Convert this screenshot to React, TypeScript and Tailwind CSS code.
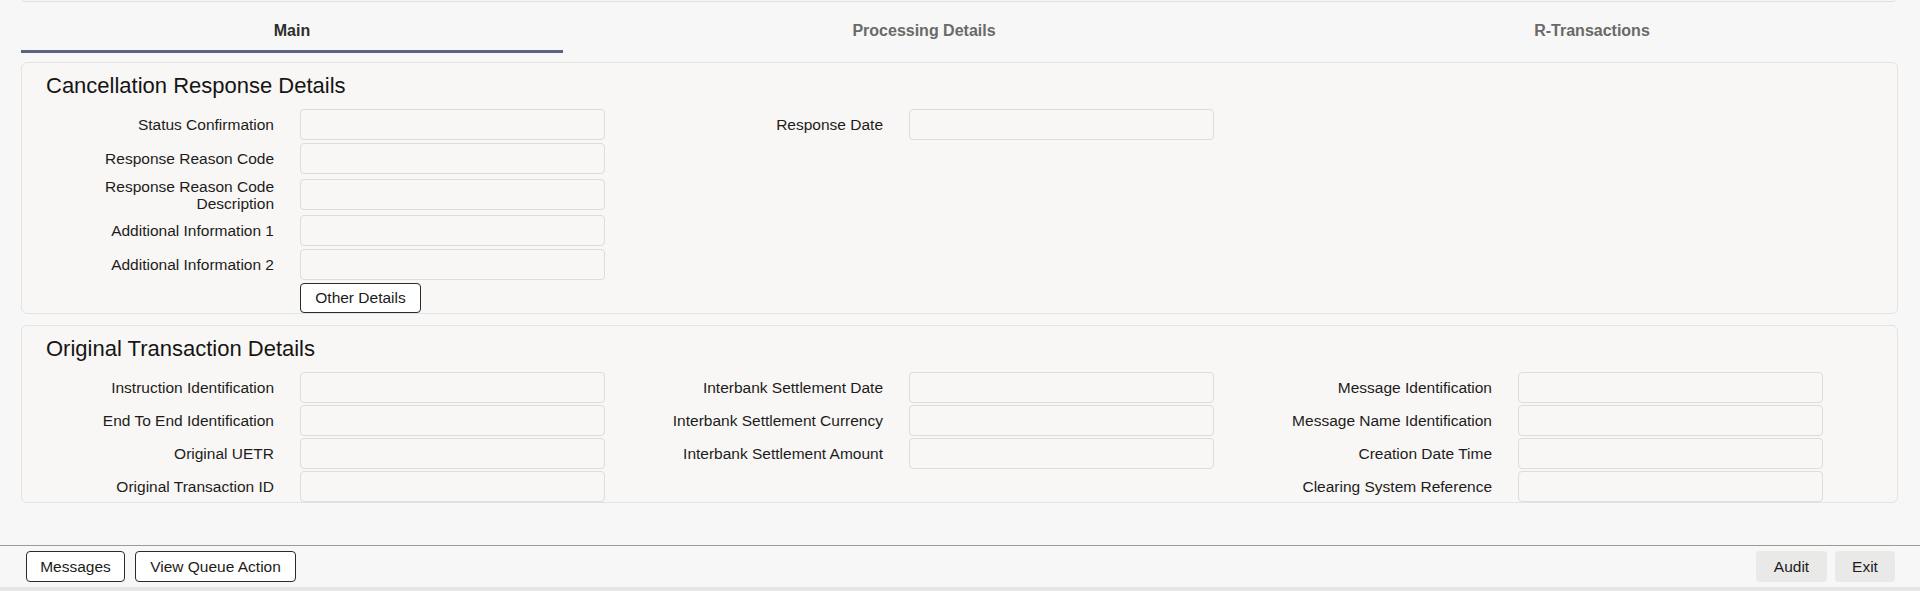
import React from 'react';

type Field = { label: React.ReactNode; tall?: boolean };

const font = { fontFamily: '"Liberation Sans", Arial, sans-serif' };

function FieldRow({ label, tall }: Field) {
    return (
        <div className={`flex items-center ${tall ? 'h-[35px]' : 'h-[31px]'}`}>
            <div className="w-[228px] text-right text-[15.5px] leading-[17px] text-[#1d1c1a]">{label}</div>
            <input
                readOnly
                className="ml-[26px] w-[305px] h-[31px] border border-[#dddcda] rounded-[4px] bg-[#f8f7f6] outline-none"
            />
        </div>
    );
}

function Column({ fields, gap, children }: { fields: Field[]; gap: string; children?: React.ReactNode }) {
    return (
        <div className={`flex flex-col ${gap}`}>
            {fields.map((f, i) => (
                <FieldRow key={i} {...f} />
            ))}
            {children}
        </div>
    );
}

function Panel({ title, children }: { title: string; children: React.ReactNode }) {
    return (
        <div className="mx-[21px] mr-[22px] border border-[#e4e3e1] rounded-[6px] bg-[#f8f7f6] pl-[24px] pt-[9px]">
            <h2 className="text-[22px] leading-[28px] text-[#161513] mb-[9px]">{title}</h2>
            {children}
        </div>
    );
}

export default function App() {
    const tabs = [
        { name: 'Main', w: 'w-[542px]', active: true },
        { name: 'Processing Details', w: 'w-[722px]', active: false },
        { name: 'R-Transactions', w: 'w-[614px]', active: false },
    ];

    return (
        <div style={font} className="w-[1920px] h-[591px] bg-[#f7f7f7] flex flex-col overflow-hidden">
            <div className="ml-[22px] mr-[25px] h-[2px] border-x border-b border-[#e0e0e0] rounded-b-[4px] bg-[#f8f7f6]" />

            <div className="flex ml-[21px]">
                {tabs.map(t => (
                    <div
                        key={t.name}
                        className={`${t.w} h-[51px] pt-[18px] text-center text-[16px] leading-[22px] font-bold ${
                            t.active ? 'border-b-[3px] border-[#5a6482] text-[#2f2e2c]' : 'text-[#6a6967]'
                        }`}
                    >
                        {t.name}
                    </div>
                ))}
            </div>

            <div className="mt-[9px]">
                <Panel title="Cancellation Response Details">
                    <div className="grid grid-cols-[609px_609px_609px]">
                        <Column
                            gap="gap-[3px]"
                            fields={[
                                { label: 'Status Confirmation' },
                                { label: 'Response Reason Code' },
                                { label: <>Response Reason Code<br />Description</>, tall: true },
                                { label: 'Additional Information 1' },
                                { label: 'Additional Information 2' },
                            ]}
                        >
                            <div className="flex">
                                <button className="ml-[254px] h-[30px] w-[121px] border border-[#2b2a28] rounded-[4px] bg-white text-[15.5px] text-[#1d1c1a]">
                                    Other Details
                                </button>
                            </div>
                        </Column>
                        <Column gap="gap-[3px]" fields={[{ label: 'Response Date' }]} />
                    </div>
                </Panel>
            </div>

            <div className="mt-[11px]">
                <Panel title="Original Transaction Details">
                    <div className="grid grid-cols-[609px_609px_609px]">
                        <Column
                            gap="gap-[2px]"
                            fields={[
                                { label: 'Instruction Identification' },
                                { label: 'End To End Identification' },
                                { label: 'Original UETR' },
                                { label: 'Original Transaction ID' },
                            ]}
                        />
                        <Column
                            gap="gap-[2px]"
                            fields={[
                                { label: 'Interbank Settlement Date' },
                                { label: 'Interbank Settlement Currency' },
                                { label: 'Interbank Settlement Amount' },
                            ]}
                        />
                        <Column
                            gap="gap-[2px]"
                            fields={[
                                { label: 'Message Identification' },
                                { label: 'Message Name Identification' },
                                { label: 'Creation Date Time' },
                                { label: 'Clearing System Reference' },
                            ]}
                        />
                    </div>
                </Panel>
            </div>

            <div className="flex-1" />

            <div className="border-t border-[#9b9b9b] h-[42px] flex items-center justify-between pl-[26px] pr-[25px]">
                <div className="flex gap-[10px]">
                    <button className="h-[31px] w-[99px] border border-[#2b2a28] rounded-[4px] bg-white text-[15.5px] text-[#1d1c1a]">
                        Messages
                    </button>
                    <button className="h-[31px] w-[161px] border border-[#2b2a28] rounded-[4px] bg-white text-[15.5px] text-[#1d1c1a]">
                        View Queue Action
                    </button>
                </div>
                <div className="flex gap-[8px]">
                    <button className="h-[31px] w-[71px] rounded-[4px] bg-[#e9e9e8] text-[15.5px] text-[#1d1c1a]">
                        Audit
                    </button>
                    <button className="h-[31px] w-[60px] rounded-[4px] bg-[#e9e9e8] text-[15.5px] text-[#1d1c1a]">
                        Exit
                    </button>
                </div>
            </div>
            <div className="h-[4px] bg-[#e6e6e6]" />
        </div>
    );
}
